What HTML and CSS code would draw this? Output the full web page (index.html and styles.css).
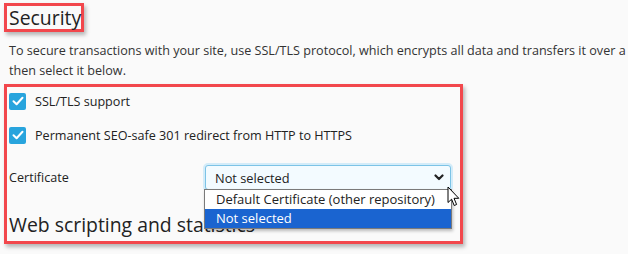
FILE: index.html
```html
<!DOCTYPE html>
<html>
<head>
<meta charset="utf-8">
<link rel="stylesheet" href="styles.css">
</head>
<body>
<div class="page">
  <div class="mark mark-title"><h2 class="title">Security</h2></div>
  <p class="intro">To secure transactions with your site, use SSL/TLS protocol, which encrypts all data and transfers it over a secure connection. Upload an SSL/TLS certificate, and<br>then select it below.</p>
  <div class="mark mark-form">
    <div class="check-row">
      <span class="check"><svg width="12" height="10" viewBox="0 0 12 10"><path d="M1.5 5.2 L4.6 8.2 L10.5 1.8" fill="none" stroke="#fff" stroke-width="2" stroke-linecap="round" stroke-linejoin="round"/></svg></span>
      <span class="check-label">SSL/TLS support</span>
    </div>
    <div class="check-row">
      <span class="check"><svg width="12" height="10" viewBox="0 0 12 10"><path d="M1.5 5.2 L4.6 8.2 L10.5 1.8" fill="none" stroke="#fff" stroke-width="2" stroke-linecap="round" stroke-linejoin="round"/></svg></span>
      <span class="check-label">Permanent SEO-safe 301 redirect from HTTP to HTTPS</span>
    </div>
    <div class="field-row">
      <span class="field-label">Certificate</span>
      <div class="select-wrap">
        <div class="select">
          <span>Not selected</span>
          <svg class="chev" width="10" height="7" viewBox="0 0 10 7"><path d="M1.5 1.5 L5 5 L8.5 1.5" fill="none" stroke="#222" stroke-width="2.2" stroke-linecap="round" stroke-linejoin="round"/></svg>
        </div>
        <ul class="options">
          <li class="option">Default Certificate (other repository)</li>
          <li class="option selected">Not selected</li>
        </ul>
        <svg class="cursor" width="14" height="22" viewBox="0 0 14 22"><path d="M1 1 L1 16.5 L4.6 13.2 L7.2 19.5 L9.6 18.5 L7 12.3 L11.8 12.3 Z" fill="#fff" stroke="#000" stroke-width="1" stroke-linejoin="round"/></svg>
      </div>
    </div>
    <h2 class="subtitle">Web scripting and statistics</h2>
  </div>
</div>
</body>
</html>
```

FILE: styles.css
```css
* { box-sizing: border-box; }
html, body { margin: 0; padding: 0; overflow: hidden; }
body {
  background: #fafafa;
  font-family: "Open Sans", "DejaVu Sans", sans-serif;
  color: #222;
  width: 628px;
  height: 254px;
}
.page {
  padding: 3px 0 0 4px;
  width: 628px;
}
.mark {
  border: 3px solid #f2474c;
  box-shadow: 2px 3px 4px rgba(0,0,0,0.28);
}
.mark-title {
  display: inline-block;
  width: 80px;
  height: 29px;
  padding: 0 0 0 2px;
}
.title {
  margin: 0;
  font-size: 19.4px;
  font-weight: 400;
  line-height: 23px;
  color: #222;
}
.intro {
  margin: 9px 0 0 5px;
  width: 1000px;
  font-size: 12.6px;
  line-height: 20px;
  color: #333;
}
.mark-form {
  margin-top: 3px;
  width: 459px;
  height: 160px;
  padding: 5px 0 0 2px;
  display: flex;
  flex-direction: column;
}
.check-row {
  display: flex;
  align-items: center;
  gap: 9px;
  height: 18px;
  margin-bottom: 16px;
}
.check {
  width: 17px;
  height: 17px;
  border-radius: 2px;
  background: #28a4dd;
  display: flex;
  align-items: center;
  justify-content: center;
}
.check-label {
  font-size: 12.6px;
  color: #222;
}
.field-row {
  display: flex;
  align-items: center;
  height: 25px;
  margin-top: 5px;
}
.field-label {
  font-size: 12.6px;
  width: 196px;
  color: #222;
}
.select-wrap {
  position: relative;
  width: 246px;
}
.select {
  height: 25px;
  border: 1px solid #7cc3e6;
  background: #f3fbff;
  box-shadow: 0 0 0 2px #d3ecf9;
  border-radius: 3px;
  display: flex;
  align-items: center;
  justify-content: space-between;
  padding: 0 6px 0 9px;
  font-size: 12.8px;
  color: #222;
}
.chev { display: block; }
.options {
  position: absolute;
  left: -1px;
  top: 24px;
  width: 248px;
  margin: 0;
  padding: 0;
  list-style: none;
  background: #fff;
  border: 1px solid #7a7a7a;
  box-shadow: 1px 2px 3px rgba(0,0,0,0.25);
  z-index: 2;
}
.option {
  height: 19px;
  line-height: 19px;
  padding-left: 11px;
  font-size: 13px;
  color: #222;
}
.option.selected {
  background: #1a64d0;
  color: #fff;
}
.cursor {
  position: absolute;
  left: 242px;
  top: 21px;
  z-index: 3;
}
.subtitle {
  margin: 22px 0 0 0;
  font-size: 19.4px;
  font-weight: 400;
  line-height: 26px;
  color: #222;
}
```
